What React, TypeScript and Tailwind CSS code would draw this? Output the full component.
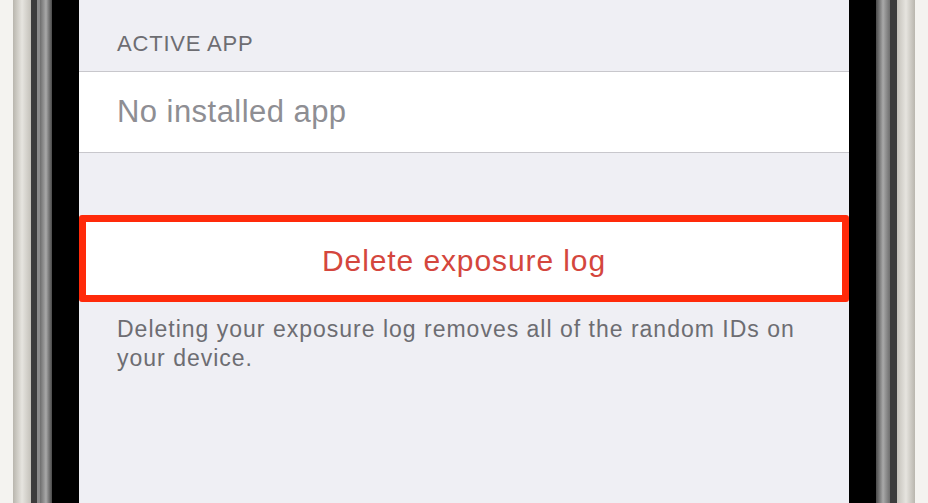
export default function App() {
  return (
    <div
      className="flex h-[503px] w-[928px] overflow-hidden bg-[#f6f5f3]"
      style={{ fontFamily: '"Liberation Sans", Arial, sans-serif' }}
    >
      {/* Left phone bezel */}
      <div className="w-[13px] shrink-0 bg-[#f4f3f0]" />
      <div className="w-[18px] shrink-0 bg-gradient-to-r from-[#b9b6ae] via-[#e6e4df] to-[#c4c1ba]" />
      <div className="w-[6px] shrink-0 bg-[#3c3c3c]" />
      <div className="w-[3px] shrink-0 bg-[#8a8a8a]" />
      <div className="w-[12px] shrink-0 bg-gradient-to-r from-[#6e6e6e] via-[#a9a9a9] to-[#4a4a4a]" />
      <div className="w-[27px] shrink-0 bg-black" />

      {/* Screen */}
      <div className="flex w-[770px] shrink-0 flex-col bg-[#efeff4]">
        <div className="flex h-[71px] items-end pb-[16px] pl-[38px]">
          <span className="text-[22px] leading-none tracking-[0.8px] text-[#6d6d72]">ACTIVE APP</span>
        </div>
        <div className="flex h-[82px] items-center border-y border-[#c8c7cc] bg-white pl-[38px]">
          <span className="text-[31px] tracking-[0.45px] text-[#8e8e93]">No installed app</span>
        </div>
        <div className="h-[62px]" />
        <div className="flex h-[87px] items-center justify-center rounded-[3px] border-[7px] border-[#ff2a0a] bg-white pt-[3px]">
          <span className="text-[30px] tracking-[0.9px] text-[#d4463d]">Delete exposure log</span>
        </div>
        <p className="px-[38px] pt-[13px] text-[23px] leading-[29px] tracking-[1px] text-[#6d6d72]">
          Deleting your exposure log removes all of the random IDs on your device.
        </p>
      </div>

      {/* Right phone bezel */}
      <div className="w-[27px] shrink-0 bg-black" />
      <div className="w-[14px] shrink-0 bg-gradient-to-r from-[#4a4a4a] via-[#a9a9a9] to-[#6e6e6e]" />
      <div className="w-[7px] shrink-0 bg-[#3c3c3c]" />
      <div className="w-[18px] shrink-0 bg-gradient-to-r from-[#c4c1ba] via-[#e6e4df] to-[#b9b6ae]" />
      <div className="w-[13px] shrink-0 bg-[#f4f3f0]" />
    </div>
  );
}
